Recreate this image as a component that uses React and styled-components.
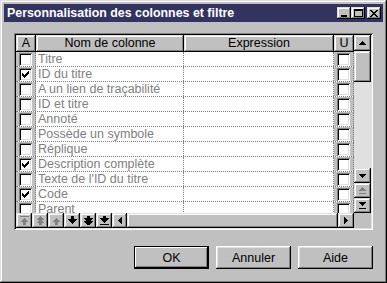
import React from 'react'
import styled, { createGlobalStyle } from 'styled-components'

const GlobalStyle = createGlobalStyle`
  html, body { margin: 0; padding: 0; background: #c0c0c0; }
  body { font-family: "Liberation Sans", Arial, sans-serif; font-size: 12px; }
`

const raised = `
  background: #c0c0c0;
  box-shadow: inset -1px -1px 0 #000, inset 1px 1px 0 #dfdfdf,
    inset -2px -2px 0 #808080, inset 2px 2px 0 #fff;
`

const sunken = `
  box-shadow: inset 1px 1px 0 #808080, inset -1px -1px 0 #fff,
    inset 2px 2px 0 #000, inset -2px -2px 0 #dfdfdf;
`

const Window = styled.div`
  ${raised}
  width: 387px;
  height: 283px;
  box-sizing: border-box;
  padding: 4px;
  display: flex;
  flex-direction: column;
`

const TitleBar = styled.div`
  height: 18px;
  background: #33335f;
  display: flex;
  align-items: center;
  justify-content: space-between;
  padding: 0 2px 0 2px;
`

const TitleText = styled.div`
  color: #fff;
  font-weight: bold;
  font-size: 12.4px;
  padding-left: 1px;
`

const TitleButtons = styled.div`
  display: flex;
  align-items: center;
`

const TitleBtn = styled.div`
  ${raised}
  width: 14px;
  height: 12px;
  display: flex;
  align-items: center;
  justify-content: center;
  margin-left: ${p => (p.$gap ? '2px' : '0')};
`

const Body = styled.div`
  padding: 11px 10px 0 10px;
  display: flex;
  flex-direction: column;
`

const GridBox = styled.div`
  ${sunken}
  background: #fff;
  height: 197px;
  box-sizing: border-box;
  padding: 2px;
  display: grid;
  grid-template-columns: 20px 148px 150px 20px 17px;
  grid-template-rows: 17px 1fr 15px;
`

const HeaderCell = styled.div`
  ${raised}
  display: flex;
  align-items: center;
  justify-content: center;
  color: #000;
  font-size: 12.5px;
  padding-bottom: 1px;
  box-sizing: border-box;
`

const Rows = styled.div`
  grid-column: 1 / 5;
  overflow: hidden;
`

const Row = styled.div`
  display: grid;
  grid-template-columns: 20px 148px 150px 20px;
  height: 15px;
  box-sizing: border-box;
  border-bottom: 1px dotted #808080;
`

const Cell = styled.div`
  background: ${p => (p.$gray ? '#c0c0c0' : '#fff')};
  border-right: 1px dotted #808080;
  box-sizing: border-box;
  display: flex;
  align-items: center;
  justify-content: ${p => (p.$gray ? 'center' : 'flex-start')};
  padding-left: ${p => (p.$gray ? '0' : '2px')};
  color: #808080;
  font-size: 12.5px;
  white-space: nowrap;
  overflow: hidden;
  line-height: 14px;
`

const Check = styled.div`
  ${sunken}
  background: #fff;
  width: 13px;
  height: 13px;
  margin-top: 1px;
  box-sizing: border-box;
  display: flex;
  align-items: center;
  justify-content: center;
`

const VScroll = styled.div`
  grid-column: 5;
  grid-row: 1 / 3;
  display: flex;
  flex-direction: column;
  background: #e0e0e0;
`

const SBtn = styled.div`
  ${raised}
  height: ${p => p.$h}px;
  flex-shrink: 0;
  display: flex;
  align-items: center;
  justify-content: center;
`

const Track = styled.div`
  flex: 1;
`

const BottomBar = styled.div`
  grid-column: 1 / 5;
  grid-row: 3;
  display: flex;
  background: #c0c0c0;
`

const NavBtn = styled.div`
  ${raised}
  width: ${p => p.$w || 16}px;
  height: 15px;
  flex-shrink: 0;
  display: flex;
  align-items: center;
  justify-content: center;
`

const HThumb = styled.div`
  ${raised}
  flex: 1;
  height: 15px;
`

const Corner = styled.div`
  grid-column: 5;
  grid-row: 3;
  background: #c0c0c0;
`

const Buttons = styled.div`
  display: flex;
  justify-content: flex-end;
  gap: 7px;
  margin-top: 16px;
`

const Button = styled.div`
  background: #c0c0c0;
  width: 75px;
  height: 23px;
  box-sizing: border-box;
  display: flex;
  align-items: center;
  justify-content: center;
  color: #000;
  font-size: 12.5px;
  box-shadow: ${p =>
    p.$default
      ? 'inset 0 0 0 1px #000, inset -2px -2px 0 #000, inset 2px 2px 0 #fff, inset -3px -3px 0 #808080'
      : 'inset -1px -1px 0 #000, inset 1px 1px 0 #fff, inset -2px -2px 0 #808080, inset 2px 2px 0 #dfdfdf'};
`

const Glyph = ({ w = 9, h = 9, children }) => (
  <svg width={w} height={h} viewBox={`0 0 ${w} ${h}`} shapeRendering="crispEdges">
    {children}
  </svg>
)

const CheckMark = () => (
  <Glyph w={7} h={7}>
    <path d="M6 0h1v3h-1v1h-1v1h-1v1h-1v1h-1v-1h-1v-1h-1v-3h1v1h1v1h1v-1h1v-1h1z" fill="#000" />
  </Glyph>
)

const upHead = (y, c) => <path d={`M4 ${y}h1v1h1v1h1v1h1v1h-7v-1h1v-1h1v-1h1z`} fill={c} />
const downHead = (y, c) => <path d={`M0 ${y}h9v1h-1v1h-1v1h-1v1h-1v1h-1v-1h-1v-1h-1v-1h-1v-1h-1z`} fill={c} />

const gray = '#808080'

const navIcons = [
  <Glyph key="1"><rect x="0" y="0" width="9" height="1" fill={gray} />{upHead(2, gray)}<rect x="3" y="6" width="3" height="3" fill={gray} /></Glyph>,
  <Glyph key="2">{upHead(0, gray)}{upHead(3, gray)}<rect x="3" y="7" width="3" height="2" fill={gray} /></Glyph>,
  <Glyph key="3">{upHead(2, gray)}<rect x="3" y="6" width="3" height="3" fill={gray} /></Glyph>,
  <Glyph key="4"><rect x="3" y="0" width="3" height="3" fill="#000" />{downHead(3, '#000')}</Glyph>,
  <Glyph key="5"><rect x="3" y="0" width="3" height="2" fill="#000" />{downHead(2, '#000')}{downHead(5, '#000')}</Glyph>,
  <Glyph key="6"><rect x="3" y="0" width="3" height="3" fill="#000" />{downHead(2, '#000')}<rect x="0" y="8" width="9" height="1" fill="#000" /></Glyph>
]

const Tri = ({ dir, color = '#000', bar }) => {
  const paths = {
    up: 'M3 0h1v1h1v1h1v1h1v1h-7v-1h1v-1h1v-1h1z',
    down: 'M0 0h7v1h-1v1h-1v1h-1v1h-1v-1h-1v-1h-1v-1h-1z'
  }
  if (dir === 'left') return <Glyph w={4} h={7}><path d="M3 0h1v7h-1v-1h-1v-1h-1v-1h-1v-1h1v-1h1v-1h1z" fill={color} /></Glyph>
  if (dir === 'right') return <Glyph w={4} h={7}><path d="M0 0h1v1h1v1h1v1h1v1h-1v1h-1v1h-1v1h-1z" fill={color} /></Glyph>
  return (
    <Glyph w={7} h={bar ? 7 : 4}>
      <path d={paths[dir]} fill={color} />
      {bar && <rect x="0" y="6" width="7" height="1" fill={color} />}
    </Glyph>
  )
}

const rows = [
  ['Titre', false],
  ['ID du titre', true],
  ['A un lien de traçabilité', false],
  ['ID et titre', false],
  ['Annoté', false],
  ['Possède un symbole', false],
  ['Réplique', false],
  ['Description complète', true],
  ["Texte de l'ID du titre", false],
  ['Code', true],
  ['Parent', false]
]

export default function App() {
  return (
    <>
      <GlobalStyle />
      <Window>
        <TitleBar>
          <TitleText>Personnalisation des colonnes et filtre</TitleText>
          <TitleButtons>
            <TitleBtn>
              <Glyph w={6} h={8}><rect x="0" y="6" width="6" height="2" fill="#000" /></Glyph>
            </TitleBtn>
            <TitleBtn>
              <Glyph w={9} h={8}><path d="M0 0h9v8h-9zM1 2v5h7v-5z" fill="#000" fillRule="evenodd" /></Glyph>
            </TitleBtn>
            <TitleBtn $gap>
              <Glyph w={8} h={7}>
                <path d="M0 0h2v1h1v1h2v-1h1v-1h2v1h-1v1h-1v1h-1v1h1v1h1v1h1v1h-2v-1h-1v-1h-2v1h-1v1h-2v-1h1v-1h1v-1h1v-1h-1v-1h-1v-1h-1z" fill="#000" />
              </Glyph>
            </TitleBtn>
          </TitleButtons>
        </TitleBar>
        <Body>
          <GridBox>
            <HeaderCell>A</HeaderCell>
            <HeaderCell>Nom de colonne</HeaderCell>
            <HeaderCell>Expression</HeaderCell>
            <HeaderCell>U</HeaderCell>
            <VScroll>
              <SBtn $h={16}><Tri dir="up" /></SBtn>
              <SBtn $h={31} />
              <Track />
              <SBtn $h={15}><Tri dir="down" /></SBtn>
              <SBtn $h={15}><Tri dir="up" bar color={gray} /></SBtn>
              <SBtn $h={15}><Tri dir="down" bar /></SBtn>
            </VScroll>
            <Rows>
              {rows.map(([name, checked]) => (
                <Row key={name}>
                  <Cell $gray>
                    <Check>{checked && <CheckMark />}</Check>
                  </Cell>
                  <Cell>{name}</Cell>
                  <Cell />
                  <Cell $gray>
                    <Check />
                  </Cell>
                </Row>
              ))}
            </Rows>
            <BottomBar>
              {navIcons.map((icon, i) => (
                <NavBtn key={i}>{icon}</NavBtn>
              ))}
              <NavBtn $w={15}><Tri dir="left" /></NavBtn>
              <HThumb />
              <NavBtn $w={16}><Tri dir="right" /></NavBtn>
            </BottomBar>
            <Corner />
          </GridBox>
          <Buttons>
            <Button $default>OK</Button>
            <Button>Annuler</Button>
            <Button>Aide</Button>
          </Buttons>
        </Body>
      </Window>
    </>
  )
}
